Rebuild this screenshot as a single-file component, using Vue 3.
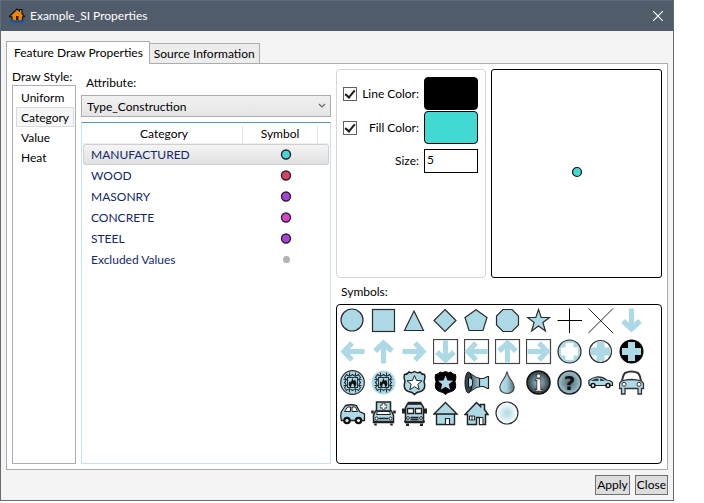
<script setup>
import { ref } from 'vue'

const activeTab = ref('draw')
const drawStyles = ['Uniform', 'Category', 'Value', 'Heat']
const drawStyle = ref('Category')
const attribute = ref('Type_Construction')
const lineOn = ref(true)
const fillOn = ref(true)
const size = ref('5')

const categories = [
  { name: 'MANUFACTURED', fill: '#43d9d3' },
  { name: 'WOOD', fill: '#d9435f' },
  { name: 'MASONRY', fill: '#a743d9' },
  { name: 'CONCRETE', fill: '#d943c9' },
  { name: 'STEEL', fill: '#a743d9' },
  { name: 'Excluded Values', fill: null }
]
const selected = ref('MANUFACTURED')

const B = '#add8e6'
const outline = `fill="${B}" stroke="#2b2b2b" stroke-width="1.2"`
const frame = '<rect x="1" y="1" width="24" height="24" fill="#fff" stroke="#444" stroke-width="1.2"/>'
const arrow = (deg, reach = 12) =>
  `<g transform="rotate(${deg} 13 13)" fill="none" stroke="${B}" stroke-width="5.2"><path d="M13 ${13 - reach}V22"/><path d="M4.500 13.500L13 21.500L21.500 13.500"/></g>`
const plus = (a, w) =>
  `M${13 - w} ${13 - a}H${13 + w}V${13 - w}H${13 + a}V${13 + w}H${13 + w}V${13 + a}H${13 - w}V${13 + w}H${13 - a}V${13 - w}H${13 - w}Z`
const badgeArt =
  '<g fill="none" stroke="#263238" stroke-width="1.1"><path d="M7 5Q10 8 13 5Q16 8 19 5L21 8Q18 10 21 13Q18 16 21 18L19 21Q16 18 13 21Q10 18 7 21L5 18Q8 16 5 13Q8 10 5 8Z"/><path d="M8 8H18V18H8Z"/><path d="M4 10H8M18 10H22M4 16H8M18 16H22M10 3V7M16 3V7M10 19V23M16 19V23"/></g><path d="M13 7.5Q12.5 10 14.5 11.5L15.5 10Q18 14 16 17L14.5 18Q15 15 13 14Q11.500 15 11.500 18Q8.500 16.500 9.500 13L10.500 11.500L11.200 13Q12.500 10.500 13 7.500Z" fill="#101416"/>'
const shield = 'M3 5Q6 5 7.500 2.500Q10 4 13 2Q16 4 18.500 2.500Q20 5 23 5Q24 8 22.500 12Q25 20 19 22Q15 22.500 13 25Q11 22.500 7 22Q1 20 3.500 12Q2 8 3 5Z'
const star = 'M13 6L15 10.900L20.500 11.300L16.300 14.800L17.700 20.200L13 17.200L8.300 20.200L9.700 14.800L5.500 11.300L11 10.900Z'

const symbols = [
  { name: 'Circle', art: `<circle cx="12.500" cy="12.500" r="11" ${outline}/>` },
  { name: 'Square', art: `<rect x="2" y="2" width="22" height="22" ${outline}/>` },
  { name: 'Triangle', art: `<path d="M12.500 3.500L22 23H3Z" ${outline}/>` },
  { name: 'Diamond', art: `<path d="M12.500 2L23.500 13L12.500 24L1.500 13Z" ${outline}/>` },
  { name: 'Pentagon', art: `<path d="M12.500 2.300L23.500 10L19.500 23H5.500L1.500 10Z" ${outline}/>` },
  { name: 'Octagon', art: `<path d="M8.500 2H17.500L24 8.500V17.500L17.500 24H8.500L2 17.500V8.500Z" ${outline}/>` },
  { name: 'Star', art: `<path d="M13 2L15.700 10H24L17.400 15L19.900 23.500L13 18.400L6.100 23.500L8.600 15L2 10H10.300Z" ${outline}/>` },
  { name: 'Plus', art: '<path d="M13 1V25.500M1 13H25.500" stroke="#000" stroke-width="1"/>' },
  { name: 'Cross', art: '<path d="M1 1L25.500 25.500M25.500 1L1 25.500" stroke="#222" stroke-width="1"/>' },
  { name: 'Arrow down', art: arrow(0) },
  { name: 'Arrow left', art: arrow(90) },
  { name: 'Arrow up', art: arrow(180) },
  { name: 'Arrow right', art: arrow(270) },
  { name: 'Framed arrow down', art: frame + arrow(0, 11) },
  { name: 'Framed arrow left', art: frame + arrow(90, 11) },
  { name: 'Framed arrow up', art: frame + arrow(180, 11) },
  { name: 'Framed arrow right', art: frame + arrow(270, 11) },
  { name: 'White cross badge', art: `<circle cx="13" cy="13" r="11.500" ${outline}/><path d="${plus(8.5, 4)}" fill="#fff"/>` },
  { name: 'Blue cross badge', art: `<circle cx="13" cy="13" r="11" fill="#fff" stroke="#333" stroke-width="1.200"/><path d="${plus(9.5, 4)}" fill="${B}"/>` },
  { name: 'Black cross badge', art: `<circle cx="13" cy="13" r="12" fill="#000"/><path d="${plus(9.5, 3.5)}" fill="${B}"/>` },
  { name: 'Fire department outlined', art: `<circle cx="13" cy="13" r="11.800" ${outline}/>${badgeArt}` },
  { name: 'Fire department', art: `<circle cx="13" cy="13" r="12" fill="${B}"/>${badgeArt}` },
  { name: 'Police', art: `<path d="${shield}" fill="${B}" stroke="#222" stroke-width="1.500"/><path d="${star}" fill="#fff" stroke="#222"/>` },
  { name: 'Police filled', art: `<path d="${shield}" fill="#000" stroke="#000"/><path d="${star}" fill="${B}"/>` },
  { name: 'Siren', art: '<path d="M7 4Q13 9 17 9V17Q13 17 7 22Z" fill="url(#shade-h)" stroke="#222"/><path d="M16 9H20L24 7H25V19H24L20 17H16Z" fill="#add8e6" stroke="#222" stroke-width="1.200"/><ellipse cx="5" cy="13" rx="3.500" ry="10.500" fill="#35454c" stroke="#111"/><path d="M5 8Q10 9 9 13Q10 17 5 18Z" fill="#add8e6" stroke="#111"/>' },
  { name: 'Water drop', art: '<path d="M12.500 2Q13.500 7 17.500 12Q21.500 18 18 22Q12.500 26 7 22Q3.500 18 7.500 12Q11.500 7 12.500 2Z" fill="url(#drop)" stroke="#444" stroke-width="1.200"/>' },
  { name: 'Information', art: '<circle cx="13" cy="13" r="11.500" fill="url(#dark-r)" stroke="#111" stroke-width="1.500"/><text x="13" y="21.500" text-anchor="middle" font-family="DejaVu Serif" font-weight="bold" font-size="23" fill="#fff" stroke="#111" stroke-width="0.700">i</text>' },
  { name: 'Unknown', art: '<circle cx="13" cy="13" r="11.500" fill="url(#ask)" stroke="#222" stroke-width="1.500"/><text x="13" y="20" text-anchor="middle" font-family="DejaVu Sans" font-weight="bold" font-size="20" fill="#111">?</text>' },
  { name: 'Car side', art: '<path d="M1.500 11Q5 8 9 7.500Q15 7 19 10.500Q24 11 25 13.500V16H2Q1 14 1.500 11Z" fill="#add8e6" stroke="#222" stroke-width="1.200"/><path d="M4 11L8 9H11V11.500H4ZM12.500 9Q15 9 17.500 11.500H12.500Z" fill="#334047"/><circle cx="5.500" cy="16" r="2" fill="#eee" stroke="#111" stroke-width="1.500"/><circle cx="20.500" cy="16" r="2" fill="#eee" stroke="#111" stroke-width="1.500"/>' },
  { name: 'Car front', art: '<path d="M3.500 13Q4 6 6.500 3.500Q13 0.500 19.500 3.500Q22 6 22.500 13" fill="#fff" stroke="#333" stroke-width="2"/><path d="M3 11.500Q13 8.500 23 11.500L25 14V19H23V24.500H19.500V19H6.500V24.500H3V19H1V14Z" fill="#add8e6" stroke="#333" stroke-width="1.300"/><circle cx="5.500" cy="14.800" r="2" fill="#fff" stroke="#333"/><circle cx="20.500" cy="14.800" r="2" fill="#fff" stroke="#333"/>' },
  { name: 'Small car', art: '<path d="M2 11L6 5Q12 3.500 17 5L20 11L25 13.500V20H2Q0.500 15 2 11Z" fill="#add8e6" stroke="#222" stroke-width="1.300"/><path d="M5 11L8 6.500H11V11ZM12.500 6.500H16L18 11H12.500Z" fill="#fff" stroke="#222"/><circle cx="7.500" cy="20" r="2.700" fill="#eee" stroke="#111" stroke-width="2.200"/><circle cx="19" cy="20" r="2.700" fill="#eee" stroke="#111" stroke-width="2.200"/>' },
  { name: 'Ambulance', art: '<path d="M6 1.500H20V11H6Z" fill="#add8e6" stroke="#222" stroke-width="1.500"/><path d="M13 2.500V9M9.500 6H16.500" stroke="#222" stroke-width="3.500"/><path d="M13 3V8.500M10 6H16" stroke="#fff" stroke-width="2"/><path d="M5 10.500H21L23 15V22H3V15Z" fill="#add8e6" stroke="#222" stroke-width="1.500"/><path d="M7 11H19L20 14H6Z" fill="#fff" stroke="#222"/><path d="M2 10V13M24 10V13M5 23V25M21 23V25" stroke="#222" stroke-width="2.500"/><path d="M3 21H23M8 18H18" stroke="#222" stroke-width="1.500"/><circle cx="6" cy="18" r="1.500" fill="#fff" stroke="#222"/><circle cx="20" cy="18" r="1.500" fill="#fff" stroke="#222"/>' },
  { name: 'Fire truck', art: '<path d="M6 3.500H20L22 7V22H4V7Z" fill="#add8e6" stroke="#222" stroke-width="1.600"/><path d="M6 2.500H20" stroke="#222" stroke-width="2.500"/><path d="M6 8H12V13H6ZM14 8H20V13H14Z" fill="#fff" stroke="#222" stroke-width="1.300"/><path d="M2 8V13M24 8V13M6 23V25.500M20 23V25.500" stroke="#222" stroke-width="3"/><path d="M2.500 21H23.500M9 17H17M9 19H17" stroke="#222" stroke-width="1.400"/><circle cx="6.500" cy="17.500" r="1.400" fill="#fff" stroke="#222"/><circle cx="19.500" cy="17.500" r="1.400" fill="#fff" stroke="#222"/>' },
  { name: 'House', art: '<path d="M4 13H22V24H4Z" fill="#add8e6" stroke="#222" stroke-width="1.400"/><path d="M13 2L24.500 13.500H1.500Z" fill="#add8e6" stroke="#222" stroke-width="1.400"/><path d="M13 18H17V24H13Z" fill="#fff" stroke="#222" stroke-width="1.200"/>' },
  { name: 'House with chimney', art: '<path d="M17 4H21V9L24.500 14H22V24H16V17H13V24H4V14H1.500L13 2L17 6Z" fill="#add8e6" stroke="#222" stroke-width="1.500"/><path d="M6 15.500H11V19.500H6Z" fill="#fff" stroke="#222"/><path d="M8.500 15.500V19.500" stroke="#222"/><path d="M16 17H19.500V24H16Z" fill="#fff" stroke="#222"/>' },
  { name: 'Soft circle', art: '<circle cx="12.500" cy="12.500" r="11" fill="url(#soft)" stroke="#333" stroke-width="1.200"/>' }
]
</script>

<template>
  <main class="window">
    <svg class="defs" aria-hidden="true">
      <defs>
        <radialGradient id="soft"><stop offset="0" stop-color="#add8e6" /><stop offset="1" stop-color="#fff" /></radialGradient>
        <radialGradient id="dark-r"><stop offset="0" stop-color="#a4ccd9" /><stop offset="1" stop-color="#2c383d" /></radialGradient>
        <radialGradient id="ask"><stop offset="0" stop-color="#50666e" /><stop offset="1" stop-color="#9cc4d1" /></radialGradient>
        <linearGradient id="drop"><stop offset="0" stop-color="#b8dfeb" /><stop offset="0.5" stop-color="#a5cfdd" /><stop offset="1" stop-color="#587079" /></linearGradient>
        <linearGradient id="shade-h"><stop offset="0" stop-color="#455a62" /><stop offset="1" stop-color="#add8e6" /></linearGradient>
      </defs>
    </svg>

    <header class="titlebar">
      <svg class="app-icon" viewBox="0 0 16 16" aria-hidden="true">
        <path d="M0.500 8.500L8 1L10.500 3V1.500H13V5.500L15.500 8.500L13.500 9V13H3V9Z" fill="#e8890c" stroke="#111" stroke-width="1.200" />
        <path d="M7 8H9.500V12H7Z" fill="#33210a" />
        <path d="M0.500 13Q3 10.500 6 12.500T11 12.500T15.500 13L13 15.500L10 14.500L6 15.500L3 14.500Z" fill="#1557a8" />
      </svg>
      <h1>Example_SI Properties</h1>
      <button class="close-x" aria-label="Close window">
        <svg viewBox="0 0 10 10"><path d="M0 0L10 10M10 0L0 10" stroke="#fff" stroke-width="1.200" /></svg>
      </button>
    </header>

    <div class="body">
      <div class="tabs" role="tablist">
        <button role="tab" class="tab" :class="{ active: activeTab === 'draw' }" @click="activeTab = 'draw'">Feature Draw Properties</button>
        <button role="tab" class="tab" :class="{ active: activeTab === 'source' }" @click="activeTab = 'source'">Source Information</button>
      </div>

      <section class="panel">
        <div class="col styles">
          <span id="style-label" class="style-label">Draw Style:</span>
          <div class="listbox" role="listbox" aria-labelledby="style-label">
            <button v-for="s in drawStyles" :key="s" role="option" :class="{ on: s === drawStyle }" @click="drawStyle = s">{{ s }}</button>
          </div>
        </div>

        <div class="col attributes">
          <label class="heading" for="attribute">Attribute:</label>
          <div class="combo">
            <select id="attribute" v-model="attribute"><option>Type_Construction</option></select>
            <svg viewBox="0 0 8 6" aria-hidden="true"><path d="M1 1L4 4L7 1" fill="none" stroke="#666" stroke-width="1.200" /></svg>
          </div>
          <div class="grid-box">
            <table>
              <colgroup><col /><col class="c-symbol" /><col class="c-end" /></colgroup>
              <thead><tr><th>Category</th><th>Symbol</th><th></th></tr></thead>
              <tbody>
                <tr v-for="c in categories" :key="c.name" :class="{ sel: c.name === selected }" @click="selected = c.name">
                  <td>{{ c.name }}</td>
                  <td class="dot">
                    <svg viewBox="0 0 12 12">
                      <circle v-if="c.fill" cx="6" cy="5.500" r="4.500" :fill="c.fill" stroke="#2a2030" stroke-width="1.400" />
                      <circle v-else cx="6.500" cy="5.500" r="3.500" fill="#b3b3b3" />
                    </svg>
                  </td>
                  <td></td>
                </tr>
              </tbody>
            </table>
          </div>
        </div>

        <div class="col appearance">
          <div class="top">
            <div class="options">
              <input id="line-on" v-model="lineOn" type="checkbox" />
              <label for="line-on">Line Color:</label>
              <button class="swatch line" aria-label="Choose line color"></button>
              <input id="fill-on" v-model="fillOn" type="checkbox" />
              <label for="fill-on">Fill Color:</label>
              <button class="swatch fill" aria-label="Choose fill color"></button>
              <label class="size-label" for="size">Size:</label>
              <input id="size" v-model="size" class="size" type="text" />
            </div>
            <div class="preview">
              <svg viewBox="0 0 12 12"><circle cx="6" cy="6" r="4.500" fill="#43d9d3" stroke="#111" stroke-width="1.200" /></svg>
            </div>
          </div>
          <span id="symbols-label" class="heading">Symbols:</span>
          <div class="symbols" role="group" aria-labelledby="symbols-label">
            <button v-for="s in symbols" :key="s.name" :aria-label="s.name">
              <svg viewBox="0.5 0.5 26 26" v-html="s.art"></svg>
            </button>
          </div>
        </div>
      </section>

      <footer>
        <button class="action">Apply</button>
        <button class="action">Close</button>
      </footer>
    </div>
  </main>
</template>

<style>
body {
  background: #fff;
}
</style>

<style scoped>
* {
  box-sizing: border-box;
}
.window {
  display: flex;
  flex-direction: column;
  min-height: calc(100vh - 2px);
  margin: 0 30px 2px 0;
  border: 1px solid #616c7a;
  background: #f4f4f4;
  color: #000;
  font: 12px/16px Lato, 'Open Sans', sans-serif;
}
button,
input,
select {
  margin: 0;
  padding: 0;
  border: 0;
  background: none;
  color: inherit;
  font: inherit;
}
svg {
  display: block;
}
.defs {
  position: absolute;
  width: 0;
  height: 0;
}
.titlebar {
  display: flex;
  align-items: center;
  height: 30px;
  padding: 0 10px 0 8px;
  background: #515c6b;
  color: #fff;
}
.app-icon {
  width: 16px;
  height: 16px;
}
h1 {
  flex: 1;
  margin: 0 0 0 5px;
  font-size: 12px;
  font-weight: 400;
}
.close-x svg {
  width: 10px;
  height: 10px;
}
.body {
  display: flex;
  flex: 1;
  flex-direction: column;
  padding: 10px 5px 5px;
}
.tabs {
  display: flex;
  align-items: flex-end;
}
.tab {
  height: 20px;
  padding: 0 4px;
  border: 1px solid #acacac;
  border-bottom: 0;
  border-left: 0;
  background: #ececec;
  white-space: nowrap;
}
.tab.active {
  z-index: 1;
  height: 23px;
  margin-bottom: -1px;
  padding: 0 6px 0 7px;
  border-left: 1px solid #acacac;
  background: #fff;
}
.panel {
  display: flex;
  flex: 1;
  gap: 5px;
  padding: 5px;
  border: 1px solid #acacac;
  background: #fff;
}
.col {
  display: flex;
  flex-direction: column;
  min-width: 0;
}
.styles {
  flex: 0 0 64px;
}
.attributes {
  flex: 250 1 0;
}
.appearance {
  flex: 326 1 0;
}
.style-label {
  white-space: nowrap;
}
.heading {
  padding: 6px 5px 4px;
}
.listbox {
  display: flex;
  flex: 1;
  flex-direction: column;
  padding: 1px 1px 1px 3px;
  border: 1px solid #abadb3;
}
.listbox button {
  height: 20px;
  padding: 2px 4px 0;
  border: 1px solid transparent;
  text-align: left;
}
.listbox .on {
  border-color: #dadada;
  background: #f6f6f6;
}
.combo {
  display: grid;
  align-items: center;
  margin-bottom: 5px;
}
.combo > * {
  grid-area: 1 / 1;
}
.combo select {
  height: 22px;
  padding: 1px 20px 0 5px;
  border: 1px solid #acacac;
  background: linear-gradient(#f0f0f0, #e5e5e5);
  appearance: none;
}
.combo svg {
  justify-self: end;
  width: 8px;
  height: 6px;
  margin-right: 5px;
  pointer-events: none;
}
.grid-box {
  flex: 1;
  padding: 3px 1px;
  border: 1px solid #c5e0ee;
  border-top-color: #5c93bc;
}
table {
  width: 100%;
  table-layout: fixed;
  border-spacing: 0;
}
.c-symbol {
  width: 75px;
}
.c-end {
  width: 11px;
}
th {
  height: 18px;
  padding: 0 0 2px;
  border-right: 1px solid #e2e4e6;
  border-bottom: 1px solid #eee;
  font-weight: 400;
  line-height: 15px;
}
th:first-child {
  padding-left: 3px;
}
th:last-child {
  border-right: 0;
}
td {
  height: 21px;
  padding: 0;
  border: 1px solid transparent;
  border-width: 1px 0;
  color: #12286e;
}
td:first-child {
  padding-left: 7px;
  border-left-width: 1px;
}
td:last-child {
  border-right-width: 1px;
}
.sel td {
  border-color: #cfcfcf;
  background: linear-gradient(#f6f6f6, #dfdfdf) border-box;
}
.sel td:first-child {
  border-radius: 3px 0 0 3px;
}
.sel td:last-child {
  border-radius: 0 3px 3px 0;
}
.dot {
  padding-left: 10px;
}
.dot svg {
  width: 12px;
  height: 12px;
  margin: 0 auto;
}
.top {
  display: grid;
  grid-template-columns: 150fr 171fr;
  gap: 5px;
  min-height: 209px;
}
.options {
  display: grid;
  grid-template-columns: 14px 1fr 54px;
  grid-template-rows: 33px 33px 28px;
  column-gap: 5px;
  row-gap: 1px;
  align-items: center;
  padding: 7px 7px 7px 6px;
  border: 1px solid #d5d5d5;
  border-radius: 4px;
  text-align: right;
  white-space: nowrap;
}
.options input[type='checkbox'] {
  width: 14px;
  height: 14px;
  border: 1px solid #606060;
  background: #fff;
  appearance: none;
}
.options input[type='checkbox']:checked::after {
  display: block;
  width: 4px;
  height: 8px;
  margin: 0 auto;
  border: solid #1c1c1c;
  border-width: 0 2px 2px 0;
  box-sizing: content-box;
  content: '';
  transform: rotate(40deg);
}
.swatch {
  height: 33px;
  border: 1px solid #000;
  border-radius: 4px;
}
.line {
  background: #000;
}
.fill {
  background: #43d9d3;
}
.size-label {
  grid-column: 1 / 3;
  padding-top: 4px;
}
.size {
  align-self: end;
  width: 100%;
  height: 24px;
  padding: 0 2px 4px;
  border: 1px solid #000;
  background: #fff;
}
.preview {
  display: flex;
  align-items: center;
  justify-content: center;
  padding-bottom: 3px;
  border: 1px solid #000;
  border-radius: 3px;
}
.preview svg {
  width: 12px;
  height: 12px;
}
.symbols {
  display: flex;
  flex: 1;
  flex-wrap: wrap;
  align-content: flex-start;
  gap: 5px;
  padding: 3px;
  border: 1px solid #000;
  border-radius: 4px;
}
.symbols button,
.symbols svg {
  width: 26px;
  height: 26px;
}
footer {
  display: flex;
  justify-content: flex-end;
  gap: 5px;
  padding-top: 5px;
}
.action {
  height: 20px;
  padding: 0 1px;
  border: 1px solid #707070;
  background: #ddd;
}
</style>
